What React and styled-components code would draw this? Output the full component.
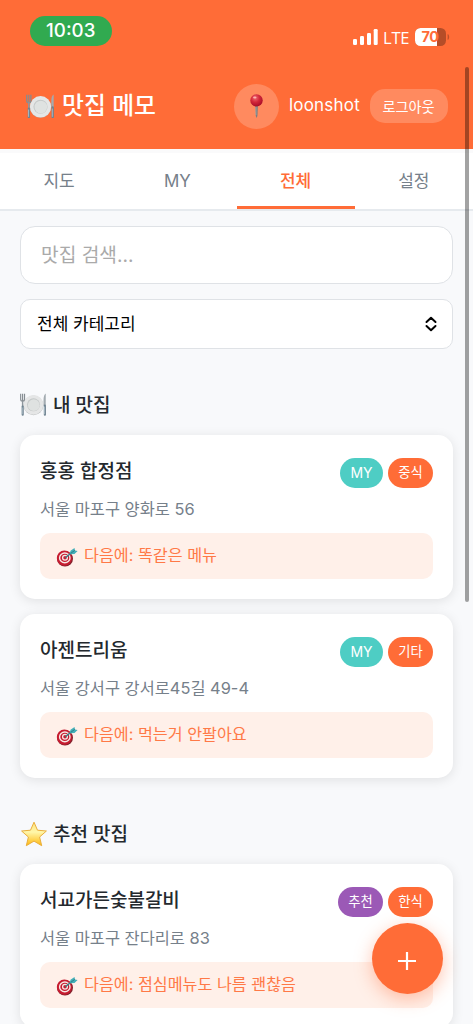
import React from "react";
import styled, { createGlobalStyle } from "styled-components";

const GlobalStyle = createGlobalStyle`
  * {
    box-sizing: border-box;
  }

  body {
    margin: 0;
    background: #f8f9fa;
    font-family: Inter, "Noto Sans CJK KR", sans-serif;
    color: #24292e;
    overflow: hidden;
  }

  button, input {
    font-family: inherit;
    border: none;
    padding: 0;
  }
`;

const Screen = styled.div`
  height: 1024px;
  overflow: hidden;
  background: #f8f9fb;
`;

const Header = styled.header`
  height: 149px;
  background: #ff6c37;
  color: white;
`;

const StatusBar = styled.div`
  height: 62px;
  padding: 16px 24px 0 30px;
  display: flex;
  justify-content: space-between;
`;

const Clock = styled.div`
  width: 81.5px;
  height: 29.5px;
  border-radius: 15px;
  background: #31aa50;
  text-align: center;
  font-size: 18.7px;
  line-height: 30px;
  font-weight: 500;
`;

const StatusIcons = styled.div`
  display: flex;
  align-items: center;
  height: 18px;
  margin: 12px -1px 0 0;
`;

const Network = styled.span`
  width: 26px;
  margin: 1px 6px 0 5px;
  font-family: "Open Sans", sans-serif;
  font-size: 16.5px;
  line-height: 18px;
  letter-spacing: -0.2px;
  font-weight: 500;
`;

const HeaderRow = styled.div`
  height: 88px;
  padding: 0 25px 0 26px;
  display: flex;
  align-items: center;
`;

const AppTitle = styled.h1`
  flex: 1;
  margin: 0;
  display: flex;
  align-items: center;
  gap: 7px;
  font-size: 23.8px;
  line-height: 36px;
  font-weight: 500;
  white-space: nowrap;
`;

const Avatar = styled.div`
  width: 45px;
  height: 45px;
  border-radius: 50%;
  background: #ff8a5f;
  display: flex;
  align-items: center;
  justify-content: center;
`;

const UserName = styled.span`
  width: 71px;
  margin: -2px 10px 0 10px;
  font-size: 17px;
  line-height: 24px;
  letter-spacing: 0.2px;
`;

const Logout = styled.button`
  width: 78px;
  height: 34px;
  padding: 0 1px 1px 0;
  border-radius: 15px;
  background: #ff8a5f;
  color: white;
  font-size: 14.2px;
  font-weight: 400;
`;

const Tabs = styled.nav`
  height: 62px;
  display: flex;
  background: white;
  border-top: 4px solid #fafafb;
  border-bottom: 2px solid #e6eaee;
`;

const Tab = styled.button`
  flex: 1;
  height: 56px;
  padding-top: ${(p) => (p.$latin ? 2 : 0)}px;
  background: none;
  border-bottom: 3px solid ${(p) => (p.$active ? "#ff6c37" : "transparent")};
  color: ${(p) => (p.$active ? "#ff6c37" : "#76808a")};
  font-size: 17px;
  font-weight: ${(p) => (p.$active ? 500 : 400)};
`;

const Content = styled.main`
  padding: 15px 20px 0;
`;

const Search = styled.input`
  display: block;
  width: 100%;
  height: 58px;
  padding: 0 21px 0 20px;
  border: 1px solid #dfe2e6;
  border-radius: 15px;
  background: white;
  font-size: 19.2px;

  &::placeholder {
    color: #aaaaaa;
    opacity: 1;
  }
`;

const Select = styled.button`
  width: 100%;
  height: 50px;
  margin-top: 15px;
  padding: 0 15px 3px 16px;
  display: flex;
  align-items: center;
  justify-content: space-between;
  border: 1px solid #dfe2e6;
  border-radius: 10px;
  background: white;
  color: #000;
  font-size: 17px;

  svg {
    margin-top: 3px;
  }
`;

const SectionTitle = styled.h2`
  height: 36px;
  margin: ${(p) => p.$top}px 0 12px;
  display: flex;
  align-items: center;
  gap: 6px;
  font-size: 19px;
  font-weight: 500;

  span {
    margin-top: -3px;
  }
`;

const Card = styled.article`
  height: 164px;
  margin-bottom: 15px;
  padding: 20px;
  border-radius: 15px;
  background: white;
  box-shadow: 0 2px 12px rgba(0, 0, 0, 0.1);
`;

const CardTop = styled.div`
  height: 36px;
  display: flex;
  justify-content: space-between;
`;

const CardTitle = styled.h3`
  margin: 0;
  font-size: 19px;
  line-height: 34px;
  font-weight: 500;
`;

const Badges = styled.div`
  display: flex;
  gap: 5px;
  padding-top: 3px;
`;

const badgeColors = {
  my: "#4ecdc4",
  pick: "#9b59b6",
  category: "#ff6c37",
};

const Badge = styled.span`
  width: ${(p) => (p.$type === "my" ? 43 : 45)}px;
  height: 30px;
  border-radius: 15px;
  background: ${(p) => badgeColors[p.$type]};
  color: white;
  font-size: ${(p) => (p.$type === "my" ? 14 : 13.3)}px;
  line-height: ${(p) => (p.$type === "my" ? 30 : 28)}px;
  text-align: center;
`;

const Address = styled.p`
  height: 26px;
  margin: 0 0 16px;
  font-size: 16.4px;
  line-height: 37px;
  color: #76808a;
`;

const Note = styled.div`
  height: 46px;
  padding: 0 16px;
  display: flex;
  align-items: center;
  gap: 5px;
  border-radius: 10px;
  background: #fff0e9;
  color: #ff7947;
  font-size: 16.2px;
  line-height: 24px;

  svg {
    margin-top: 1px;
  }

  span {
    margin-top: -2px;
  }
`;

const AddButton = styled.button`
  position: fixed;
  right: 30px;
  top: 923px;
  width: 71px;
  height: 71px;
  padding: 4px 1px 0 0;
  border-radius: 50%;
  background: #ff6c37;
  box-shadow: 0 5px 18px rgba(255, 108, 55, 0.4);
  display: flex;
  align-items: center;
  justify-content: center;
`;

const ScrollThumb = styled.div`
  position: fixed;
  right: 4px;
  top: 67px;
  width: 4px;
  height: 535px;
  border-radius: 3px;
  background: rgba(0, 0, 0, 0.36);
`;

function Signal() {
  return (
    <svg width="25" height="18" viewBox="0 0 25 18" fill="white">
      <rect x="0" y="11" width="4" height="6" rx="1.2" />
      <rect x="7" y="8" width="4" height="9" rx="1.2" />
      <rect x="14" y="5" width="4" height="12" rx="1.2" />
      <rect x="20.7" y="1" width="4" height="16" rx="1.2" />
    </svg>
  );
}

function Battery() {
  return (
    <svg width="35" height="18" viewBox="0 0 35 18">
      <rect width="31" height="18" rx="5.5" fill="#b54d28" />
      <path d="M22 0H5.5A5.5 5.5 0 0 0 0 5.5v7A5.5 5.5 0 0 0 5.5 18H22z" fill="white" />
      <path d="M33 6.5q1.7 2.5 0 5z" fill="#b54d28" stroke="#b54d28" strokeWidth=".6" />
      <text x="6.5" y="14.3" fontSize="14.5" fontWeight="700" fill="#ff6c37" textLength="17.5">
        70
      </text>
    </svg>
  );
}

function Plate({ size = 27 }) {
  return (
    <svg width={size} height={size * 0.86} viewBox="0 0 28 24">
      <circle cx="14" cy="12.8" r="10.2" fill="#b9bcbd" />
      <circle cx="14" cy="12.2" r="10.2" fill="#e5e6e6" />
      <circle cx="14" cy="12.2" r="6.8" fill="#c5c9c9" />
      <circle cx="14.3" cy="12.6" r="6.1" fill="#dfe2e1" />
      <path d="M.7.8v5.7q0 2 2 2t2-2V.8M2.7.8v8" fill="none" stroke="#858c91" strokeWidth="1.2" />
      <path d="M2.7 8v6" stroke="#8e969c" strokeWidth="1.5" />
      <path d="M2.8 14v8.5" stroke="#6f8390" strokeWidth="2.2" strokeLinecap="round" />
      <path d="M26.7.5q-2.4 1.3-2.3 7.5v5h2.3z" fill="#a3abb0" />
      <path d="M25.8 13v9.5" stroke="#6f8390" strokeWidth="2.2" strokeLinecap="round" />
      <path d="M25.4 14v8M2.4 15v7" stroke="#b7c8d2" strokeWidth=".7" />
    </svg>
  );
}

function Pin() {
  return (
    <svg width="14" height="26" viewBox="0 0 14 26">
      <defs>
        <radialGradient id="pinHead" cx=".4" cy=".3" r=".7">
          <stop offset="0" stopColor="#f06a70" />
          <stop offset=".5" stopColor="#d2263a" />
          <stop offset="1" stopColor="#a70c28" />
        </radialGradient>
      </defs>
      <path d="M5.3 12h2.6l-.5 11-.8 2-.8-2z" fill="#777f82" />
      <path d="M6 13v9" stroke="#b0b5b5" strokeWidth=".6" />
      <circle cx="6.5" cy="7.4" r="6.2" fill="url(#pinHead)" />
      <ellipse cx="4.8" cy="4.6" rx="1.7" ry="1" fill="#ffb4b0" />
    </svg>
  );
}

function Star() {
  return (
    <svg width="27" height="26" viewBox="0 0 27 26">
      <defs>
        <linearGradient id="starFill" x1="0" y1="0" x2="0" y2="1">
          <stop offset="0" stopColor="#ffe27c" />
          <stop offset=".42" stopColor="#fff7ab" />
          <stop offset="1" stopColor="#ffb80c" />
        </linearGradient>
      </defs>
      <path
        d="M14 1.2l3.5 8 8.9.8-6.8 6 2.1 8.7L14 20.1l-7.7 4.6L8.4 16 1.6 10l8.9-.8z"
        fill="url(#starFill)"
        stroke="#e9ae3c"
        strokeWidth="1"
        strokeLinejoin="round"
      />
    </svg>
  );
}

function Target() {
  return (
    <svg width="23" height="20" viewBox="0 0 23 20">
      <ellipse cx="9" cy="11.8" rx="8" ry="7.8" fill="#82202b" />
      <circle cx="8.4" cy="11.1" r="7.6" fill="#c71d31" />
      <ellipse cx="8.8" cy="10.9" rx="5.2" ry="4.9" fill="none" stroke="#f7e9e5" strokeWidth="1.4" />
      <circle cx="9" cy="10.8" r="2.4" fill="#c71d31" stroke="#f7e9e5" strokeWidth="1.3" />
      <path d="M9.4 10.8l6-5" stroke="#387d86" strokeWidth="1.4" />
      <path d="M13.6 7.2l.9-3.4 4-2.9.5 2.7 2.6.4-3.1 3z" fill="#42afb8" />
      <path d="M14.6 6.4l4.2-3" stroke="#28727c" strokeWidth=".8" />
    </svg>
  );
}

const tabs = ["지도", "MY", "전체", "설정"];

const myPlaces = [
  {
    name: "홍홍 합정점",
    address: "서울 마포구 양화로 56",
    note: "똑같은 메뉴",
    type: "my",
    label: "MY",
    category: "중식",
  },
  {
    name: "아젠트리움",
    address: "서울 강서구 강서로45길 49-4",
    note: "먹는거 안팔아요",
    type: "my",
    label: "MY",
    category: "기타",
  },
];

const picks = [
  {
    name: "서교가든숯불갈비",
    address: "서울 마포구 잔다리로 83",
    note: "점심메뉴도 나름 괜찮음",
    type: "pick",
    label: "추천",
    category: "한식",
  },
];

function PlaceCard({ place }) {
  return (
    <Card>
      <CardTop>
        <CardTitle>{place.name}</CardTitle>
        <Badges>
          <Badge $type={place.type}>{place.label}</Badge>
          <Badge $type="category">{place.category}</Badge>
        </Badges>
      </CardTop>
      <Address>{place.address}</Address>
      <Note>
        <Target />
        <span>다음에: {place.note}</span>
      </Note>
    </Card>
  );
}

function App() {
  return (
    <Screen>
      <GlobalStyle />
      <Header>
        <StatusBar>
          <Clock>10:03</Clock>
          <StatusIcons>
            <Signal />
            <Network>LTE</Network>
            <Battery />
          </StatusIcons>
        </StatusBar>
        <HeaderRow>
          <AppTitle>
            <Plate size={29} />
            맛집 메모
          </AppTitle>
          <Avatar>
            <Pin />
          </Avatar>
          <UserName>loonshot</UserName>
          <Logout>로그아웃</Logout>
        </HeaderRow>
      </Header>
      <Tabs>
        {tabs.map((tab) => (
          <Tab key={tab} $active={tab === "전체"} $latin={tab === "MY"}>
            {tab}
          </Tab>
        ))}
      </Tabs>
      <Content>
        <Search placeholder="맛집 검색..." />
        <Select>
          전체 카테고리
          <svg width="12" height="16" viewBox="0 0 12 16" fill="none" stroke="#000" strokeWidth="2">
            <path d="M1.5 6L6 1.8 10.5 6M1.5 10L6 14.2 10.5 10" strokeLinecap="round" strokeLinejoin="round" />
          </svg>
        </Select>
        <SectionTitle $top={38}>
          <Plate />
          <span>내 맛집</span>
        </SectionTitle>
        {myPlaces.map((place) => (
          <PlaceCard key={place.name} place={place} />
        ))}
        <SectionTitle $top={38}>
          <Star />
          <span>추천 맛집</span>
        </SectionTitle>
        {picks.map((place) => (
          <PlaceCard key={place.name} place={place} />
        ))}
      </Content>
      <AddButton aria-label="맛집 추가">
        <svg width="20" height="20" viewBox="0 0 20 20" stroke="white" strokeWidth="2.2">
          <path d="M10 1v18M1 10h18" />
        </svg>
      </AddButton>
      <ScrollThumb />
    </Screen>
  );
}

export default App;
